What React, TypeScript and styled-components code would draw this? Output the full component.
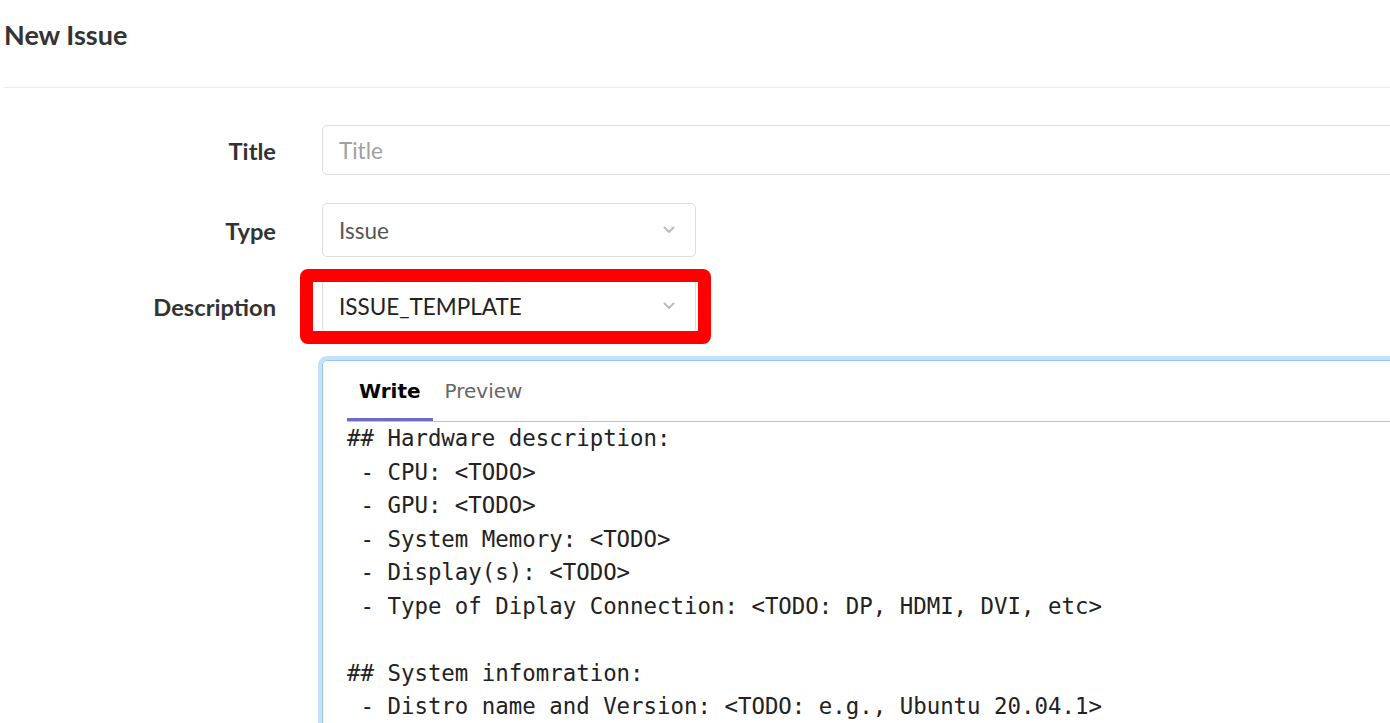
import React from "react";
import styled, { createGlobalStyle } from "styled-components";

const GlobalStyle = createGlobalStyle`
  html, body {
    margin: 0;
    padding: 0;
    background: #ffffff;
    overflow: hidden;
  }
  body {
    font-family: Lato, "Noto Sans", "Liberation Sans", sans-serif;
    color: #333333;
  }
`;

const Page = styled.div`
  width: 1390px;
  height: 723px;
  overflow: hidden;
  padding-left: 4px;
  box-sizing: border-box;
`;

const Heading = styled.h2`
  margin: 0;
  height: 88px;
  box-sizing: border-box;
  padding-top: 17px;
  font-size: 27px;
  font-weight: 700;
  line-height: 36px;
  color: #333333;
  border-bottom: 1px solid #ececec;
`;

const Form = styled.div`
  padding-top: 37px;
  display: flex;
  flex-direction: column;
`;

const Row = styled.div<{ $gap?: number }>`
  display: grid;
  grid-template-columns: 272px 1fr;
  column-gap: 46px;
  align-items: center;
  margin-bottom: ${(p) => p.$gap ?? 0}px;
`;

const Label = styled.label`
  text-align: right;
  font-size: 23.7px;
  font-weight: 700;
  color: #333333;
  padding-top: 2px;
`;

const TextInput = styled.input`
  width: 1100px;
  height: 50px;
  box-sizing: border-box;
  border: 1px solid #dedede;
  border-radius: 5px;
  padding: 0 16px;
  font-family: Lato, "Noto Sans", sans-serif;
  font-size: 22.5px;
  color: #222222;
  outline: none;
  &::placeholder {
    color: #a0a0a0;
  }
`;

const SelectBox = styled.div<{ $strong?: boolean }>`
  width: 374px;
  height: 54px;
  box-sizing: border-box;
  border: 1px solid #dedede;
  border-radius: 5px;
  padding: 0 20px 0 16px;
  display: flex;
  align-items: center;
  justify-content: space-between;
  font-size: 22.5px;
  color: ${(p) => (p.$strong ? "#222222" : "#555555")};
  background: #ffffff;
`;

const Marked = styled.div`
  position: relative;
  width: 374px;
`;

const RedFrame = styled.span`
  position: absolute;
  left: -22px;
  top: -10px;
  right: -15px;
  bottom: -11px;
  border: 13px solid #ff0000;
  border-radius: 8px;
  pointer-events: none;
`;

const Editor = styled.div`
  grid-column: 2;
  width: 1100px;
  height: 400px;
  box-sizing: border-box;
  border: 1px solid #96c8f2;
  border-radius: 5px;
  box-shadow: 0 0 0 4px #c5e0fb;
  display: flex;
  flex-direction: column;
`;

const TabBar = styled.div`
  display: flex;
  margin-left: 24px;
  border-bottom: 1px solid #9ecbf4;
`;

const Tab = styled.div<{ $active?: boolean }>`
  padding: 17px 12px 0;
  height: 60px;
  box-sizing: border-box;
  font-family: "DejaVu Sans", Verdana, sans-serif;
  font-size: 20px;
  line-height: 26px;
  font-weight: ${(p) => (p.$active ? 700 : 400)};
  color: ${(p) => (p.$active ? "#000000" : "#666666")};
  border-bottom: 3px solid ${(p) => (p.$active ? "#6b6bc8" : "transparent")};
`;

const TextArea = styled.textarea`
  flex: 1;
  border: none;
  outline: none;
  resize: none;
  overflow: hidden;
  margin: 0;
  padding: 0 0 0 24px;
  font-family: "DejaVu Sans Mono", "Liberation Mono", monospace;
  font-size: 22.4px;
  line-height: 33.5px;
  color: #222222;
  background: transparent;
  white-space: pre;
`;

const Chevron = () => (
  <svg width="12" height="8" viewBox="0 0 12 8" fill="none">
    <polyline
      points="1.5,1.5 6,6 10.5,1.5"
      stroke="#bdbdbd"
      strokeWidth="2"
      strokeLinecap="round"
      strokeLinejoin="round"
    />
  </svg>
);

const template = `## Hardware description:
 - CPU: <TODO>
 - GPU: <TODO>
 - System Memory: <TODO>
 - Display(s): <TODO>
 - Type of Diplay Connection: <TODO: DP, HDMI, DVI, etc>

## System infomration:
 - Distro name and Version: <TODO: e.g., Ubuntu 20.04.1>
 - Kernel version: <TODO>`;

const App: React.FC = () => {
  return (
    <Page>
      <GlobalStyle />
      <Heading>New Issue</Heading>
      <Form>
        <Row $gap={28}>
          <Label>Title</Label>
          <TextInput placeholder="Title" />
        </Row>
        <Row $gap={22}>
          <Label>Type</Label>
          <SelectBox>
            <span>Issue</span>
            <Chevron />
          </SelectBox>
        </Row>
        <Row $gap={27}>
          <Label>Description</Label>
          <Marked>
            <SelectBox $strong>
              <span>ISSUE_TEMPLATE</span>
              <Chevron />
            </SelectBox>
            <RedFrame />
          </Marked>
        </Row>
        <Row>
          <Editor>
            <TabBar>
              <Tab $active>Write</Tab>
              <Tab>Preview</Tab>
            </TabBar>
            <TextArea defaultValue={template} spellCheck={false} />
          </Editor>
        </Row>
      </Form>
    </Page>
  );
};

export default App;
